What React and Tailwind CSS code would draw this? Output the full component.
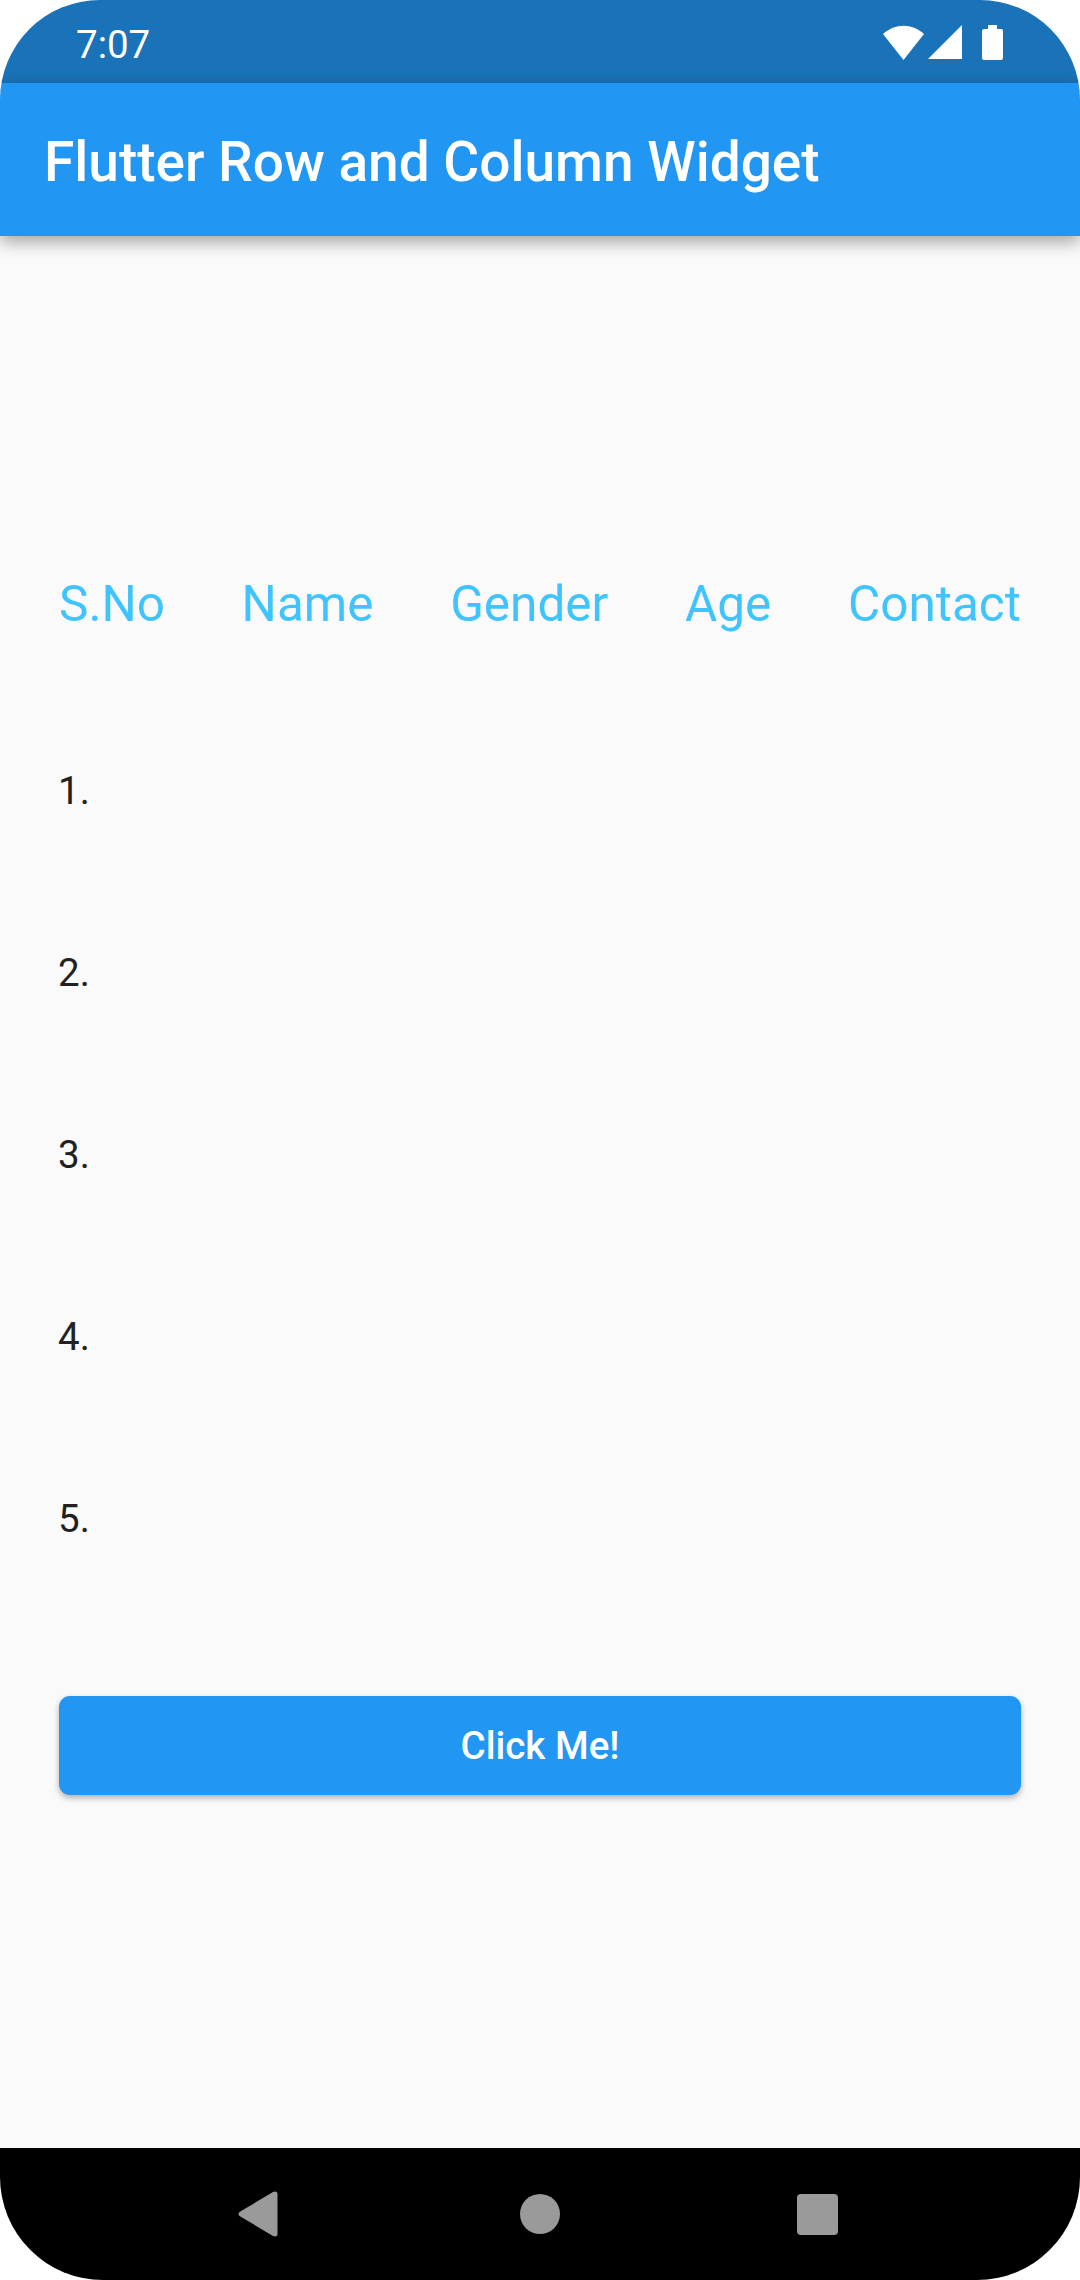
import React from 'react';

const headers = ['S.No', 'Name', 'Gender', 'Age', 'Contact'];
const rows = ['1.', '2.', '3.', '4.', '5.'];

const StatusIcons = () => (
  <div className="flex items-center mt-[1px]">
    <svg width="41" height="35" viewBox="0 0 41 35" fill="white" className="mr-[4px]">
      <path d="M0 9 C12 -2 29 -2 41 9 L20.500 35 Z" />
    </svg>
    <svg width="34" height="35" viewBox="0 0 34 35" fill="white" className="mr-[20px]">
      <path d="M34 0 V34 H0 Z" />
    </svg>
    <svg width="21" height="35" viewBox="0 0 21 35" fill="white">
      <path d="M6 0 H15 V4 H19 Q21 4 21 6 V33 Q21 35 19 35 H2 Q0 35 0 33 V6 Q0 4 2 4 H6 Z" />
    </svg>
  </div>
);

export default function App() {
  return (
    <div className="w-[1080px] h-[2280px] bg-white overflow-hidden font-['Roboto',sans-serif]">
      <div className="h-full flex flex-col bg-[#fafafa] rounded-t-[100px] rounded-b-[103px] overflow-hidden">
        <div className="h-[83px] shrink-0 bg-[#1a72b8] flex items-center justify-between pl-[76px] pr-[77px]">
          <span className="text-white text-[38.500px] leading-none mt-[7px]">7:07</span>
          <StatusIcons />
        </div>

        <header className="h-[153px] shrink-0 bg-[#2196f3] flex items-center pl-[44px] shadow-[0_6px_16px_rgba(0,0,0,0.35)] z-10">
          <h1 className="text-white font-medium text-[55px] leading-none mt-[6px]">Flutter Row and Column Widget</h1>
        </header>

        <main className="flex-1 flex flex-col px-[59px] pt-[338px]">
          <div className="flex justify-between text-[#40c4ff] text-[49.500px] leading-[60px]">
            {headers.map((h) => (
              <span key={h}>{h}</span>
            ))}
          </div>
          <div className="flex flex-col gap-[137px] mt-[134px] -ml-[1px] text-[#212121] text-[38.500px] leading-[45px]">
            {rows.map((r) => (
              <span key={r}>{r}</span>
            ))}
          </div>
          <button className="h-[99px] mt-[155px] w-full rounded-[11px] bg-[#2196f3] text-white font-medium text-[38.500px] shadow-[0_3px_6px_rgba(0,0,0,0.3)]">
            Click Me!
          </button>
        </main>

        <nav className="h-[132px] shrink-0 bg-black flex items-center pl-[238px]">
          <svg width="40" height="46" viewBox="0 0 40 46" fill="#9a9a9a" className="mr-[242px]">
            <path d="M37 0.500 Q39.500 0.500 39.500 3 V43 Q39.500 45.500 37 45.500 L35 45 L1.500 25 Q-0.500 23 1.500 21 L35 1 Z" />
          </svg>
          <div className="w-[40px] h-[40px] mr-[237px] rounded-full bg-[#9a9a9a]" />
          <div className="w-[41px] h-[41px] rounded-[4px] bg-[#9a9a9a]" />
        </nav>
      </div>
    </div>
  );
}
